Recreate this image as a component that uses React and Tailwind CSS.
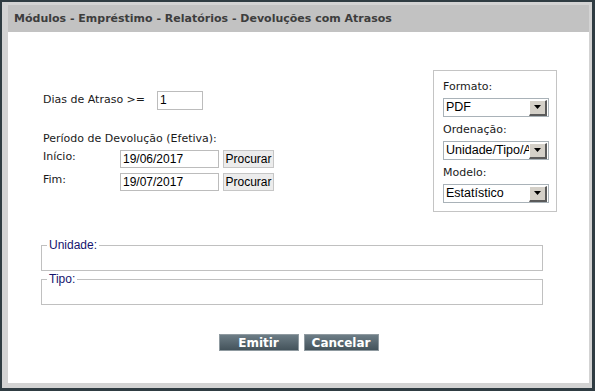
import React from "react";

const labelFont = { fontFamily: '"DejaVu Sans", Verdana, sans-serif' };

function Select({ value }) {
  return (
    <div className="flex h-[19px] w-[106px] items-center border border-[#a9b2b8] bg-white">
      <div className="flex-1 overflow-hidden whitespace-nowrap pl-[2px] text-[12.5px] leading-[17px] text-black [font-family:'Liberation_Sans',Arial,sans-serif]">
        {value}
      </div>
      <div className="mr-[1px] flex h-[16px] w-[18px] items-center justify-center border-t border-l border-b-2 border-r-2 border-t-white border-l-white border-b-[#5a5a5a] border-r-[#5a5a5a] bg-[#d4d0c8]">
        <svg width="7" height="4" viewBox="0 0 7 4">
          <path d="M0 0H7L3.5 4Z" fill="#000" />
        </svg>
      </div>
    </div>
  );
}

function Fieldset({ label }) {
  return (
    <fieldset className="m-0 w-[502px] border border-[#c0c0c0] p-0">
      <legend className="ml-[5px] px-[2px] text-[12px] leading-[14px] text-[#14146e] [font-family:'Liberation_Sans',Arial,sans-serif]">
        {label}
      </legend>
      <div className="h-[18px]" />
    </fieldset>
  );
}

export default function App() {
  return (
    <div className="h-[391px] w-[595px] bg-[#2f3c42] pt-[2px] pl-[2px] pr-[3px] pb-[3px]">
      <div className="flex h-full flex-col bg-[#d3d3d3] pt-[3px] pl-[6px] pr-[3px] pb-[5px]">
        <div className="flex h-[27px] items-center bg-[#c2c2c2] pl-[6px] pt-[2px]">
          <span
            className="text-[11px] font-bold text-[#3d3d3d]"
            style={labelFont}
          >
            Módulos - Empréstimo - Relatórios - Devoluções com Atrasos
          </span>
        </div>
        <div className="flex flex-1 flex-col bg-white" style={labelFont}>
          <div className="flex items-start">
            <div className="ml-[35px] mt-[59px] flex flex-col text-[11px] text-[#1a1a1a]">
              <div className="flex h-[18px] items-center">
                <span className="w-[114px] leading-[14px]">Dias de Atraso &gt;=</span>
                <div className="h-[19px] w-[46px] border border-[#bcbcbc] pl-[2px] text-[12px] leading-[17px] text-black [font-family:'Liberation_Sans',Arial,sans-serif]">
                  1
                </div>
              </div>
              <div className="mt-[23px] mb-[4px] leading-[14px]">
                Período de Devolução (Efetiva):
              </div>
              <div className="flex h-[18px] items-start">
                <span className="w-[77px] leading-[14px]">Início:</span>
                <div className="h-[18px] w-[99px] border border-[#bcbcbc] pl-[2px] text-[12px] leading-[16px] text-black [font-family:'Liberation_Sans',Arial,sans-serif]">
                  19/06/2017
                </div>
                <div className="ml-[4px] flex h-[18px] w-[51px] items-center justify-center border border-[#c6c6c6] bg-[#ececec] text-[12px] text-black [font-family:'Liberation_Sans',Arial,sans-serif]">
                  Procurar
                </div>
              </div>
              <div className="mt-[5px] flex h-[18px] items-start">
                <span className="w-[77px] leading-[14px]">Fim:</span>
                <div className="h-[18px] w-[99px] border border-[#bcbcbc] pl-[2px] text-[12px] leading-[16px] text-black [font-family:'Liberation_Sans',Arial,sans-serif]">
                  19/07/2017
                </div>
                <div className="ml-[4px] flex h-[18px] w-[51px] items-center justify-center border border-[#c6c6c6] bg-[#ececec] text-[12px] text-black [font-family:'Liberation_Sans',Arial,sans-serif]">
                  Procurar
                </div>
              </div>
            </div>
            <div className="ml-auto mr-[32px] mt-[38px] flex w-[124px] flex-col border border-[#c4c4c4] pt-[9px] pl-[9px] pb-[8px] text-[11px] text-[#1a1a1a]">
              <div className="mb-[4px] leading-[14px]">Formato:</div>
              <Select value="PDF" />
              <div className="mt-[6px] mb-[4px] leading-[14px]">Ordenação:</div>
              <Select value="Unidade/Tipo/Autor" />
              <div className="mt-[6px] mb-[4px] leading-[14px]">Modelo:</div>
              <Select value="Estatístico" />
            </div>
          </div>
          <div className="ml-[33px] mt-[26px] flex flex-col gap-[1px]">
            <Fieldset label="Unidade:" />
            <Fieldset label="Tipo:" />
          </div>
          <div className="mt-[29px] flex justify-center gap-[5px]">
            <div className="flex h-[17px] w-[80px] items-center justify-center border border-[#8f9aa0] bg-gradient-to-b from-[#6d7d86] to-[#44535b] text-[12px] font-bold text-white">
              Emitir
            </div>
            <div className="flex h-[17px] w-[75px] items-center justify-center border border-[#8f9aa0] bg-gradient-to-b from-[#6d7d86] to-[#44535b] text-[12px] font-bold text-white">
              Cancelar
            </div>
          </div>
        </div>
      </div>
    </div>
  );
}
